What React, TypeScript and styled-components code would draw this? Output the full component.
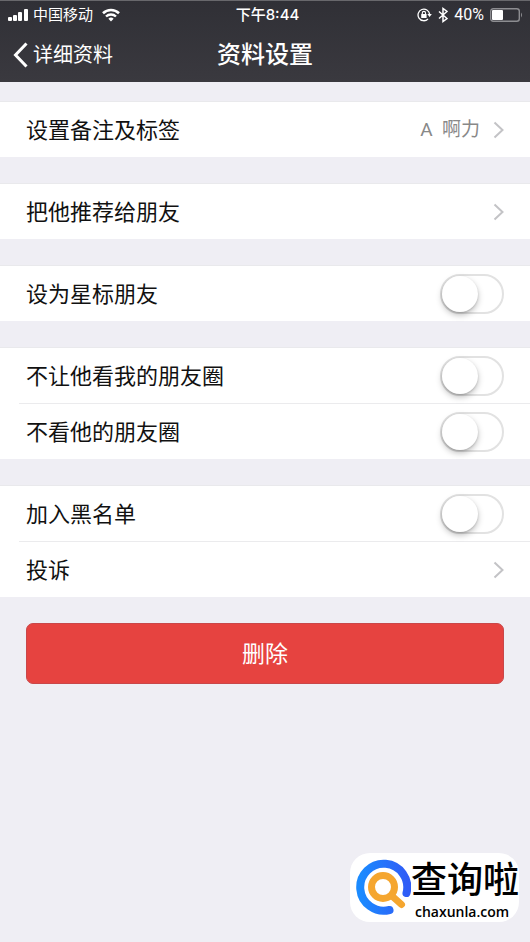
import React from "react";
import styled, { createGlobalStyle } from "styled-components";

const GlobalStyle = createGlobalStyle`
  * { box-sizing: border-box; }
  body {
    margin: 0;
    background: #efeef4;
    font-family: Inter, "Noto Sans CJK SC", sans-serif;
    color: #111;
  }
  button { font: inherit; border: 0; padding: 0; background: none; color: inherit; cursor: pointer; }
`;

const Screen = styled.div`
  position: relative;
  min-height: 100vh;
`;

const Header = styled.header`
  background: linear-gradient(#303036, #3a393f);
  border-top: 1px solid #68686c;
  color: #fff;
`;

const Bar = styled.div<{ $height: number }>`
  display: grid;
  grid-template-columns: 1fr auto 1fr;
  align-items: center;
  height: ${(p) => p.$height}px;
`;

const StatusSide = styled.div<{ $end?: boolean }>`
  display: flex;
  align-items: center;
  justify-content: ${(p) => (p.$end ? "flex-end" : "flex-start")};
  gap: ${(p) => (p.$end ? 6 : 4)}px;
  padding: 0 7px;
  font-family: Roboto, "Noto Sans CJK SC", sans-serif;
  font-size: ${(p) => (p.$end ? 16 : 15)}px;
  line-height: 20px;
`;

const Carrier = styled.span`
  margin-right: 5px;
`;

const Clock = styled.time`
  padding-left: 5px;
  font-size: 15px;
  font-weight: 500;
  line-height: 20px;
`;

const Back = styled.button`
  display: flex;
  align-items: center;
  justify-self: start;
  gap: 5px;
  padding-left: 13px;
  font-size: 20px;
  line-height: 28px;
`;

const Title = styled.h1`
  margin: 0;
  font-size: 24px;
  font-weight: 500;
  line-height: 32px;
`;

const Settings = styled.main`
  display: flex;
  flex-direction: column;
  gap: 26px;
  padding-top: 19px;
`;

const Group = styled.section`
  background: #fff;
  border-top: 1px solid #e9e9ec;
`;

const Row = styled.div`
  display: flex;
  align-items: center;
  justify-content: space-between;
  width: 100%;
  height: 55px;
  padding: 0 26px;
  font-size: 22px;
  line-height: 30px;
  text-align: left;
`;

const Divider = styled.hr`
  height: 1px;
  margin: 0 0 0 19px;
  border: 0;
  background: #ebebed;
`;

const Detail = styled.span`
  display: flex;
  align-items: center;
  gap: 13px;
  color: #888;
  font-family: Roboto, "Noto Sans CJK SC", sans-serif;
  font-size: 19px;
  white-space: pre;
`;

const Toggle = styled.input`
  appearance: none;
  display: flex;
  width: 64px;
  height: 40px;
  margin: 0;
  border: 2px solid #e2e2e2;
  border-radius: 20px;
  background: #fff;
  cursor: pointer;

  &::before {
    content: "";
    width: 36px;
    height: 36px;
    border-radius: 50%;
    background: #fff;
    box-shadow: 0 3px 6px rgba(0, 0, 0, 0.26), 0 1px 2px rgba(0, 0, 0, 0.14);
  }

  &:checked {
    justify-content: flex-end;
    background: #4bd763;
  }
`;

const DeleteButton = styled.button`
  && {
    height: 61px;
    margin: 0 26px;
    border: 1px solid #c94749;
    border-radius: 7px;
    background: #e64340;
    color: #fff;
    font-size: 23px;
    line-height: 32px;
  }
`;

const Watermark = styled.aside`
  position: absolute;
  right: 11px;
  bottom: 20px;
  display: flex;
  align-items: center;
  height: 69px;
  padding-left: 5px;
  border-radius: 20px;
  background: #fff;
  color: #000;
`;

const Brand = styled.div`
  display: flex;
  flex-direction: column;
  align-self: flex-end;
`;

const BrandName = styled.span`
  font-size: 36px;
  font-weight: 500;
  line-height: 44px;
`;

const BrandSite = styled.span`
  padding-left: 4px;
  font-family: "Open Sans", sans-serif;
  font-size: 14px;
  font-weight: 600;
  line-height: 20px;
`;

const SignalIcon = () => (
  <svg width="22" height="14" viewBox="0 0 22 14" fill="#fff" aria-hidden="true">
    <rect x="1" y="9" width="4" height="4" rx="1" />
    <rect x="6" y="7" width="4" height="6" rx="1" />
    <rect x="11" y="4" width="4" height="9" rx="1" />
    <rect x="17" y="1" width="4" height="12" rx="1" />
  </svg>
);

const WifiIcon = () => (
  <svg width="18" height="14" viewBox="0 0 18 14" fill="none" stroke="#fff" aria-hidden="true">
    <path d="M1 5.2a11.5 11.5 0 0 1 16 0" strokeWidth="2.6" />
    <path d="M4 8.5a7.2 7.2 0 0 1 10 0" strokeWidth="2.4" />
    <path d="M6.4 10.8a3.8 3.8 0 0 1 5.2 0L9 13.4Z" fill="#fff" stroke="none" />
  </svg>
);

const RotationLockIcon = () => (
  <svg width="15" height="14" viewBox="0 0 15 14" fill="none" stroke="#fff" aria-hidden="true">
    <path d="M12.6 6.2A5.8 5.8 0 1 0 11 11" strokeWidth="1.3" />
    <path d="M10.3 6.1h4.5l-2.2 3Z" fill="#fff" stroke="none" />
    <rect x="4.2" y="6.1" width="5.4" height="4" rx="0.5" fill="#fff" stroke="none" />
    <path d="M5.3 6.3V5a1.6 1.6 0 0 1 3.2 0v1.3" strokeWidth="1.1" />
  </svg>
);

const BluetoothIcon = () => (
  <svg width="10" height="16" viewBox="0 0 10 16" fill="none" stroke="#fff" strokeWidth="1.5" aria-hidden="true">
    <path d="M1 4.5 9 11.5 5 14.500V1.500l4 3-8 7" />
  </svg>
);

const BatteryIcon = () => (
  <svg width="33" height="14" viewBox="0 0 33 14" fill="none" aria-hidden="true">
    <rect x="0.7" y="0.7" width="28.6" height="12.6" rx="2.5" stroke="#8d8d91" strokeWidth="1.4" />
    <rect x="2" y="2" width="11" height="10" rx="1" fill="#fff" />
    <path d="M31 4.500q2 2.500 0 5Z" fill="#8d8d91" />
  </svg>
);

const BackIcon = () => (
  <svg width="15" height="26" viewBox="0 0 15 26" fill="none" stroke="#fff" strokeWidth="3" aria-hidden="true">
    <path d="M13.500 1.500 2.500 13l11 11.500" />
  </svg>
);

const ChevronIcon = () => (
  <svg width="11" height="18" viewBox="0 0 11 18" fill="none" stroke="#c3c3c6" strokeWidth="2" aria-hidden="true">
    <path d="m1.500 1.500 8 7.500-8 7.500" />
  </svg>
);

const BrandIcon = () => (
  <svg width="56" height="58" viewBox="0 0 56 58" fill="none" strokeLinecap="round" aria-hidden="true">
    <defs>
      <linearGradient id="ring" x1="0" y1="0" x2="1" y2="0">
        <stop offset="0" stopColor="#1b8bff" />
        <stop offset="1" stopColor="#2f5cf6" />
      </linearGradient>
    </defs>
    <path d="M34.500 51A23.500 23.500 0 1 1 51.500 34" stroke="url(#ring)" strokeWidth="8" />
    <circle cx="28" cy="28" r="11.500" stroke="#f5a62f" strokeWidth="7" />
    <path d="m37 37 9.500 8.500" stroke="#f5a62f" strokeWidth="7" />
  </svg>
);

type ItemProps = { label: string; detail?: string };

const LinkRow = ({ label, detail }: ItemProps) => (
  <Row as="button" type="button">
    <span>{label}</span>
    <Detail>
      {detail}
      <ChevronIcon />
    </Detail>
  </Row>
);

const ToggleRow = ({ label }: ItemProps) => (
  <Row as="label">
    <span>{label}</span>
    <Toggle type="checkbox" role="switch" />
  </Row>
);

export default function App() {
  return (
    <Screen>
      <GlobalStyle />
      <Header>
        <Bar $height={27}>
          <StatusSide>
            <SignalIcon />
            <Carrier>中国移动</Carrier>
            <WifiIcon />
          </StatusSide>
          <Clock>下午8:44</Clock>
          <StatusSide $end>
            <RotationLockIcon />
            <BluetoothIcon />
            <span>40%</span>
            <BatteryIcon />
          </StatusSide>
        </Bar>
        <Bar $height={54}>
          <Back type="button">
            <BackIcon />
            详细资料
          </Back>
          <Title>资料设置</Title>
        </Bar>
      </Header>
      <Settings>
        <Group>
          <LinkRow label="设置备注及标签" detail="A  啊力" />
        </Group>
        <Group>
          <LinkRow label="把他推荐给朋友" />
        </Group>
        <Group>
          <ToggleRow label="设为星标朋友" />
        </Group>
        <Group>
          <ToggleRow label="不让他看我的朋友圈" />
          <Divider />
          <ToggleRow label="不看他的朋友圈" />
        </Group>
        <Group>
          <ToggleRow label="加入黑名单" />
          <Divider />
          <LinkRow label="投诉" />
        </Group>
        <DeleteButton type="button">删除</DeleteButton>
      </Settings>
      <Watermark>
        <BrandIcon />
        <Brand>
          <BrandName>查询啦</BrandName>
          <BrandSite>chaxunla.com</BrandSite>
        </Brand>
      </Watermark>
    </Screen>
  );
}
